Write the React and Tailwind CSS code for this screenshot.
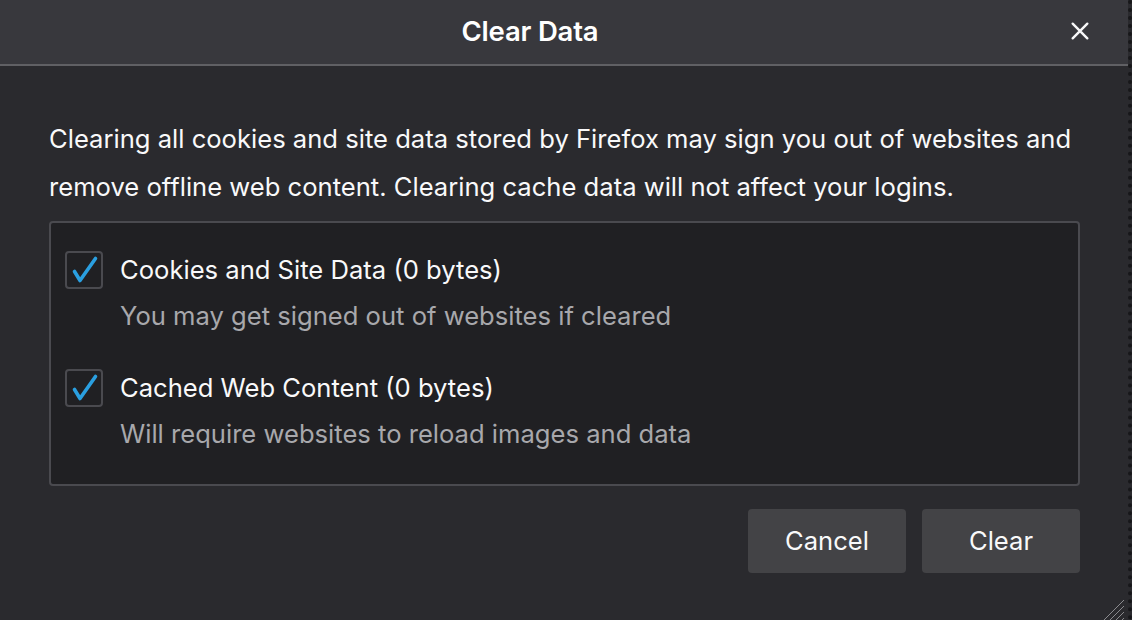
import React from 'react';

const Check = () => (
  <svg viewBox="0 0 34 34" className="w-[34px] h-[34px]">
    <path d="M7.5 18.5 L13 27.5 L28.5 5.5" fill="none" stroke="#2a9fe0" strokeWidth="3.6" strokeLinecap="round" strokeLinejoin="round" />
  </svg>
);

const Option = ({ title, hint }) => (
  <div className="flex items-start gap-[17px]">
    <div className="w-[38px] h-[38px] mt-[1px] rounded-[4px] border-2 border-[#4a4a4f] bg-[#202023] flex items-center justify-center shrink-0">
      <Check />
    </div>
    <div className="flex flex-col">
      <div className="text-[25.6px] leading-[40px] text-[#f9f9fa]">{title}</div>
      <div className="text-[25.6px] leading-[32px] mt-[10px] text-[#a8a8ac]">{hint}</div>
    </div>
  </div>
);

export default function App() {
  return (
    <div className="w-[1132px] h-[620px] bg-[#2a2a2e] border-r-[4px] border-dotted border-r-[#17171a] font-['Inter','Noto_Sans',sans-serif] relative overflow-hidden flex flex-col">
      <div className="h-[64px] bg-[#38383d] flex items-center relative shrink-0">
        <div className="w-[1060px] text-center text-[27.5px] font-semibold text-white tracking-[-0.2px]">Clear Data</div>
        <button className="absolute right-[36px] top-[19px] w-[24px] h-[24px] flex items-center justify-center">
          <svg viewBox="0 0 24 24" className="w-[22px] h-[22px]">
            <path d="M4 4 L20 20 M20 4 L4 20" stroke="#f9f9fa" strokeWidth="2.6" strokeLinecap="round" />
          </svg>
        </button>
      </div>
      <div className="h-[2px] bg-[#606064] shrink-0" />
      <div className="px-[49px] pt-[48px] flex flex-col">
        <p className="text-[25.6px] leading-[48px] text-[#f9f9fa] mt-[1px]">
          Clearing all cookies and site data stored by Firefox may sign you out of websites and remove offline web content. Clearing cache data will not affect your logins.
        </p>
        <div className="mt-[10px] h-[265px] w-[1031px] rounded-[4px] border-2 border-[#4a4a4f] bg-[#202023] px-[14px] pt-[27px] flex flex-col gap-[36px]">
          <Option title="Cookies and Site Data (0 bytes)" hint="You may get signed out of websites if cleared" />
          <Option title="Cached Web Content (0 bytes)" hint="Will require websites to reload images and data" />
        </div>
        <div className="mt-[23px] flex justify-end gap-[16px] w-[1031px]">
          <button className="w-[158px] h-[64px] rounded-[4px] bg-[#434346] text-[25.6px] text-[#f9f9fa]">Cancel</button>
          <button className="w-[158px] h-[64px] rounded-[4px] bg-[#434346] text-[25.6px] text-[#f9f9fa]">Clear</button>
        </div>
      </div>
      <svg viewBox="0 0 24 24" className="absolute right-[4px] bottom-0 w-[24px] h-[24px]">
        <path d="M24 4 L4 24 M24 10 L10 24 M24 16 L16 24 M24 22 L22 24" stroke="#8a8a8e" strokeWidth="1" />
      </svg>
    </div>
  );
}
